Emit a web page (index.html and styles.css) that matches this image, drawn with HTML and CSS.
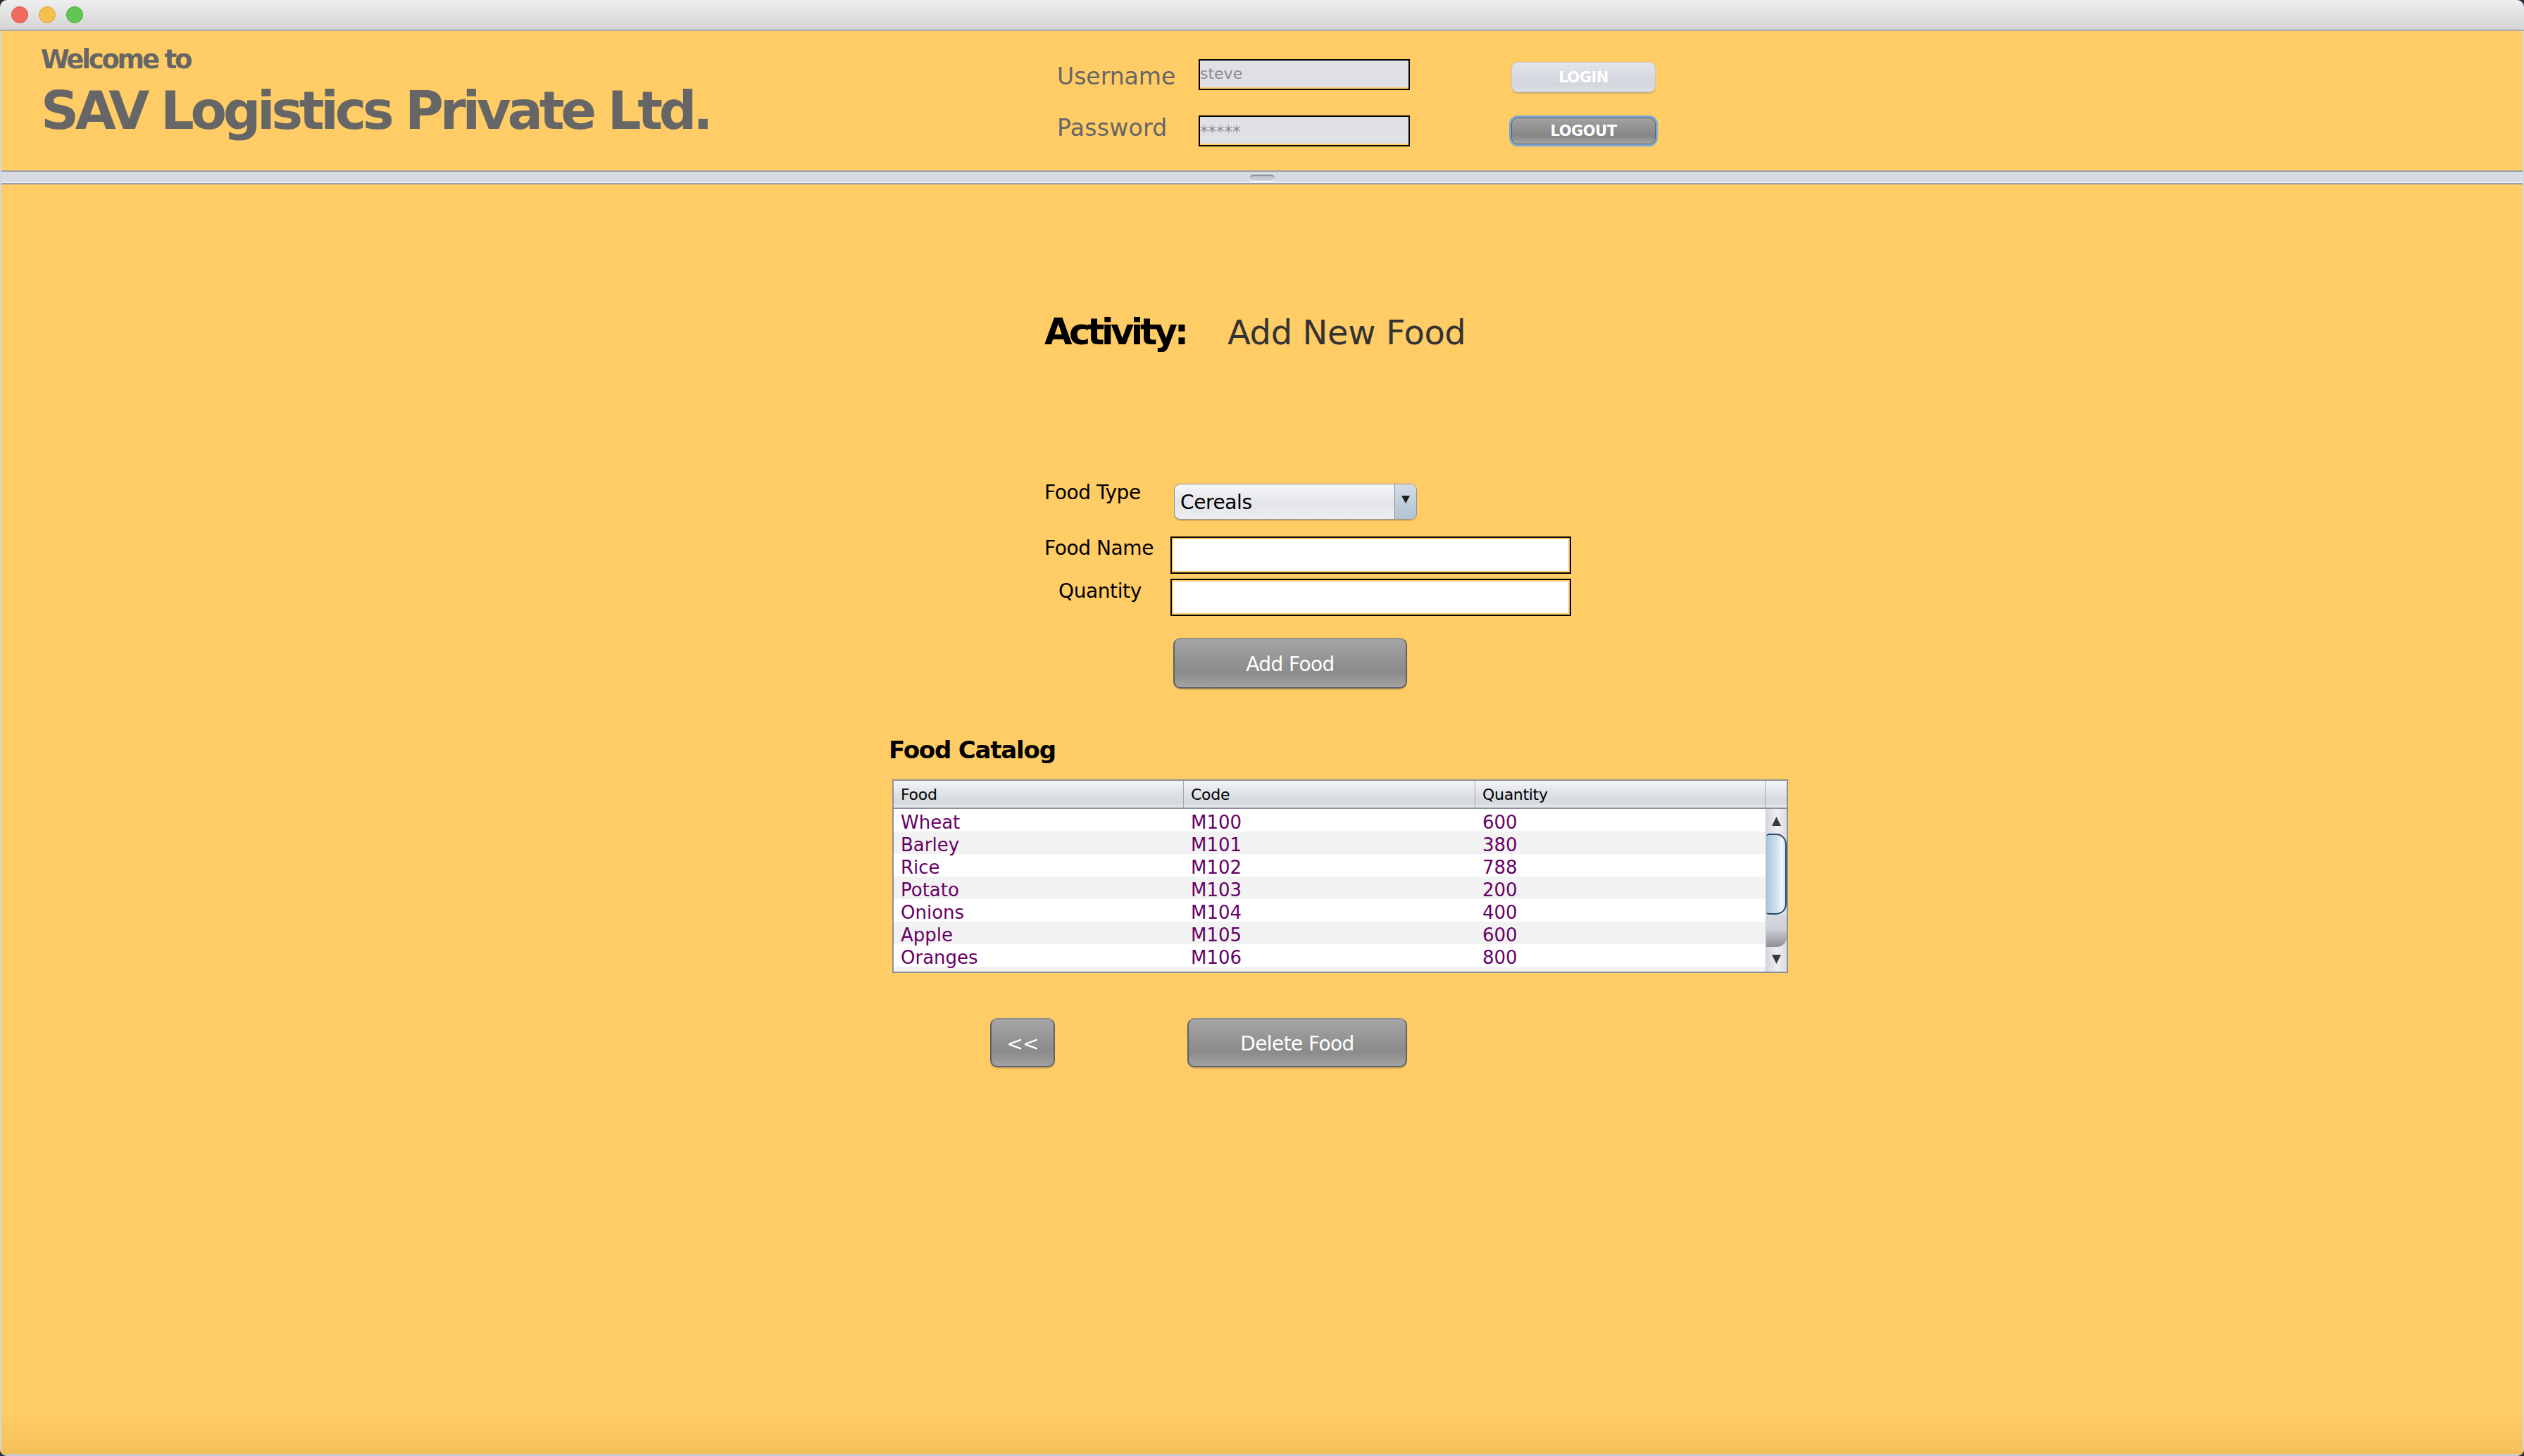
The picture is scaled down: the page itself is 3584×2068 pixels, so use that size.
FILE: index.html
```html
<!DOCTYPE html>
<html lang="en">
<head>
<meta charset="utf-8">
<title>SAV Logistics Private Ltd.</title>
<link rel="stylesheet" href="styles.css">
</head>
<body>
<div class="window">
  <div class="titlebar">
    <span class="light red"></span>
    <span class="light yellow"></span>
    <span class="light green"></span>
  </div>
  <div class="frame">
    <header class="header">
      <div class="brand">
        <div class="welcome">Welcome to</div>
        <div class="company">SAV Logistics Private Ltd.</div>
      </div>
      <div class="login">
        <div class="lbl lbl-user">Username</div>
        <div class="field field-user">steve</div>
        <div class="btn-cell"><button class="btn-login">LOGIN</button></div>
        <div class="lbl lbl-pass">Password</div>
        <div class="field field-pass">*****</div>
        <div class="btn-cell"><button class="btn-logout">LOGOUT</button></div>
      </div>
    </header>
    <div class="splitter"><span class="grip"></span></div>
    <main class="main">
      <div class="activity">
        <span class="act-label">Activity:</span>
        <span class="act-value">Add New Food</span>
      </div>
      <div class="form">
        <div class="row row1">
          <div class="flabel l-type">Food Type</div>
          <div class="combo">
            <span class="combo-text">Cereals</span>
            <span class="combo-arrow"><svg width="12" height="11" viewBox="0 0 12 11"><polygon points="0,0 12,0 6,11" fill="#1e1e1e"/></svg></span>
          </div>
        </div>
        <div class="row row2">
          <div class="flabel l-name">Food Name</div>
          <div class="input"></div>
        </div>
        <div class="row row3">
          <div class="flabel l-qty">Quantity</div>
          <div class="input"></div>
        </div>
      </div>
      <button class="btn add">Add Food</button>
      <h2 class="catalog-title">Food Catalog</h2>
      <div class="table">
        <div class="thead">
          <div class="th">Food</div>
          <div class="th">Code</div>
          <div class="th">Quantity</div>
          <div class="th corner"></div>
        </div>
        <div class="tbody">
          <div class="rows">
            <div class="tr"><span>Wheat</span><span>M100</span><span>600</span></div>
            <div class="tr"><span>Barley</span><span>M101</span><span>380</span></div>
            <div class="tr"><span>Rice</span><span>M102</span><span>788</span></div>
            <div class="tr"><span>Potato</span><span>M103</span><span>200</span></div>
            <div class="tr"><span>Onions</span><span>M104</span><span>400</span></div>
            <div class="tr"><span>Apple</span><span>M105</span><span>600</span></div>
            <div class="tr"><span>Oranges</span><span>M106</span><span>800</span></div>
            <div class="tr"><span></span><span></span><span></span></div>
          </div>
          <div class="vscroll">
            <div class="sb-arrow"><svg width="13" height="13" viewBox="0 0 13 13"><polygon points="6.5,0 13,13 0,13" fill="#3a3a3a"/></svg></div>
            <div class="sb-thumb"></div>
            <div class="sb-end"></div>
            <div class="sb-arrow"><svg width="13" height="13" viewBox="0 0 13 13"><polygon points="0,0 13,0 6.5,13" fill="#3a3a3a"/></svg></div>
          </div>
        </div>
      </div>
      <div class="actions">
        <button class="btn back">&lt;&lt;</button>
        <button class="btn delete">Delete Food</button>
      </div>
    </main>
  </div>
</div>
</body>
</html>
```

FILE: styles.css
```css
html, body {
  margin: 0;
  padding: 0;
  width: 3584px;
  height: 2068px;
  overflow: hidden;
  background: #2b2e3b;
  font-family: "DejaVu Sans", "Liberation Sans", sans-serif;
}

.window {
  width: 3584px;
  height: 2068px;
  border-radius: 10px;
  overflow: hidden;
  display: flex;
  flex-direction: column;
}

/* ---------- title bar ---------- */
.titlebar {
  flex: none;
  height: 42px;
  border-bottom: 2px solid #aeaeae;
  background: linear-gradient(#eeeeee, #d5d5d5);
  display: flex;
  align-items: center;
  padding-left: 16px;
  gap: 15px;
}
.light {
  width: 24px;
  height: 24px;
  border-radius: 50%;
  box-sizing: border-box;
}
.red { background: #ef6b5f; border: 1px solid #d8554a; }
.yellow { background: #f6c04f; border: 1px solid #d9a13f; }
.green { background: #62c655; border: 1px solid #4da73c; }

/* ---------- frame ---------- */
.frame {
  flex: 1;
  display: flex;
  flex-direction: column;
  border-left: 2px solid #d3d7de;
  border-right: 2px solid #d3d7de;
  border-bottom: 3px solid #c9cbd0;
  background: #ffcc66;
}

/* ---------- header ---------- */
.header {
  flex: none;
  height: 198px;
  box-sizing: border-box;
  display: flex;
  padding-left: 56px;
}
.brand {
  flex: none;
  width: 1443px;
  padding-top: 19px;
  color: #666666;
  font-weight: bold;
}
.welcome {
  font-size: 37px;
  line-height: 44px;
  letter-spacing: -3.2px;
}
.company {
  margin-top: 8px;
  font-size: 75px;
  line-height: 84px;
  letter-spacing: -5.3px;
  white-space: nowrap;
}
.login {
  display: grid;
  grid-template-columns: 201px 300px 352px;
  grid-template-rows: 44px 44px;
  row-gap: 36px;
  padding-top: 40px;
}
.lbl {
  font-size: 33px;
  line-height: 44px;
  color: #666666;
}
.lbl-user { margin-top: 3px; }
.lbl-pass { margin-top: -4px; letter-spacing: 0.3px; }
.field {
  box-sizing: border-box;
  height: 44px;
  border: 2px solid #000;
  background: #dfe1e6;
  box-shadow: inset 0 -2px 0 #ffcc66;
  font-size: 22px;
  line-height: 36px;
  padding-top: 1px;
  color: #8c8c8c;
}
.field-pass { font-size: 23px; padding-top: 3px; }
.btn-cell { padding-left: 144px; }
.btn-login, .btn-logout {
  display: block;
  box-sizing: border-box;
  width: 205px;
  padding: 0;
  font-family: inherit;
  font-weight: bold;
  font-size: 21px;
  letter-spacing: -0.5px;
  color: #ffffff;
  border-radius: 9px;
}
.btn-login {
  height: 43px;
  margin-top: 4px;
  border: 1.5px solid #c4c8d0;
  background: linear-gradient(#e3e5ea, #d6d9e0 55%, #d3d6dd 75%, #dcdfe5);
  box-shadow: 0 2px 1px rgba(120, 120, 130, 0.35);
}
.btn-logout {
  height: 38px;
  margin-top: 3px;
  border: 1.5px solid #55585f;
  background: linear-gradient(#a3a3a3, #8a8a8a 55%, #878787 70%, #a6a6a6);
  box-shadow: 0 0 0 3px #7ea8d6;
}

/* ---------- splitter ---------- */
.splitter {
  flex: none;
  height: 20px;
  box-sizing: border-box;
  border-top: 2px solid #9a9ea8;
  border-bottom: 2px solid #9a9ea8;
  background: #d7dae2;
  box-shadow: inset 0 -2px 0 #eceef2;
  display: flex;
  justify-content: center;
  align-items: flex-start;
  padding-top: 4px;
}
.grip {
  width: 35px;
  height: 10px;
  box-sizing: border-box;
  border-radius: 5px;
  border-top: 2px solid #8f949d;
  border-bottom: 1.5px solid #ffffff;
  background: linear-gradient(#b9bdc6, #d2d5dc);
}

/* ---------- main ---------- */
.main {
  flex: 1;
  display: flex;
  flex-direction: column;
  align-items: flex-start;
  padding-left: 1262px;
  background: linear-gradient(to bottom, rgba(200, 140, 30, 0) calc(100% - 60px), rgba(200, 140, 30, 0.2));
}

.activity {
  margin-top: 180px;
  margin-left: 219px;
  display: flex;
  align-items: baseline;
}
.act-label {
  width: 260px;
  font-size: 51px;
  line-height: 60px;
  font-weight: bold;
  letter-spacing: -4.4px;
  color: #000;
}
.act-value {
  font-size: 48px;
  line-height: 60px;
  letter-spacing: -0.4px;
  color: #333333;
}

.form {
  margin-top: 185px;
  margin-left: 219px;
}
.row {
  display: flex;
  align-items: flex-start;
}
.row1 { height: 51px; }
.row2 { margin-top: 24px; }
.row3 { margin-top: 7px; }
.flabel {
  flex: none;
  width: 179px;
  box-sizing: border-box;
  font-size: 28px;
  line-height: 32px;
  letter-spacing: -0.4px;
  color: #000;
}
.l-type { margin-top: -3px; }
.l-name { margin-top: 1px; }
.l-qty { margin-top: 2px; padding-left: 20px; }

.combo {
  margin-left: 5px;
  width: 345px;
  height: 51px;
  box-sizing: border-box;
  border: 1.5px solid #8c8f96;
  border-radius: 9px;
  background: linear-gradient(#f6f7f9, #e3e5ea 55%, #eceef1);
  box-shadow: 0 2px 1px rgba(0, 0, 0, 0.15);
  display: flex;
  overflow: hidden;
}
.combo-text {
  flex: 1;
  padding: 2px 0 0 8px;
  font-size: 28px;
  line-height: 48px;
  letter-spacing: -0.4px;
  color: #000;
}
.combo-arrow {
  flex: none;
  width: 31px;
  border-left: 1px solid #8c8f96;
  background: linear-gradient(#d4dde7, #b2c2d3);
  display: flex;
  align-items: center;
  justify-content: center;
  padding-bottom: 6px;
  box-sizing: border-box;
}

.input {
  width: 569px;
  height: 53px;
  box-sizing: border-box;
  border: 2px solid #000;
  background: #ffffff;
  box-shadow: inset 0 0 0 2px #ffcc66;
}

.btn {
  box-sizing: border-box;
  padding: 3px 0 0 0;
  border: 2px solid #5e6169;
  border-top-color: #8d8d8d;
  border-radius: 10px;
  background: linear-gradient(#a6a6a6, #8f8f8f 55%, #8b8b8b 70%, #a3a3a3);
  box-shadow: 0 2px 1px rgba(0, 0, 0, 0.12);
  color: #ffffff;
  font-family: inherit;
  font-size: 28px;
  letter-spacing: -0.6px;
}
.add {
  margin-top: 31px;
  margin-left: 402px;
  width: 332px;
  height: 72px;
}

.catalog-title {
  margin: 67px 0 0 -2px;
  font-size: 34px;
  line-height: 40px;
  font-weight: bold;
  letter-spacing: -1.2px;
  color: #000;
}

/* ---------- table ---------- */
.table {
  margin-top: 22px;
  margin-left: 3px;
  width: 1272px;
  height: 275px;
  box-sizing: border-box;
  border: 2px solid #8d9099;
  background: #ffffff;
}
.thead {
  display: grid;
  grid-template-columns: 412px 414px 412px 30px;
  height: 40px;
  box-sizing: border-box;
  border-bottom: 2px solid #8b8e96;
  background: linear-gradient(#f4f5f8, #e0e3e8 45%, #d5d8df 80%, #e6e8ed);
}
.th {
  box-sizing: border-box;
  padding: 2px 0 0 10px;
  font-size: 22px;
  line-height: 36px;
  letter-spacing: -0.3px;
  color: #000;
  border-right: 1.5px solid #a3a6ad;
}
.th.corner { border-right: none; }
.tbody {
  display: flex;
  height: 231px;
  overflow: hidden;
}
.rows {
  width: 1238px;
  flex: none;
}
.tr {
  display: grid;
  grid-template-columns: 412px 414px 412px;
  height: 32px;
  box-sizing: border-box;
  padding-top: 6px;
  font-size: 26px;
  line-height: 26px;
  color: #660066;
}
.tr span { padding-left: 10px; }
.tr:nth-child(even) { background: #f2f2f2; }

.vscroll {
  width: 30px;
  flex: none;
  box-sizing: border-box;
  border-left: 1px solid #c4c7cd;
  background: linear-gradient(to right, #d4d7dd, #eef0f3 55%, #d9dce1);
  display: flex;
  flex-direction: column;
}
.sb-arrow {
  height: 35px;
  display: flex;
  align-items: center;
  justify-content: center;
}
.sb-thumb {
  height: 115px;
  box-sizing: border-box;
  border: 2px solid #2b4866;
  border-left: none;
  border-radius: 4px 15px 15px 4px;
  background: linear-gradient(to right, #a9c3da, #cfe2f0 55%, #eefafe 85%, #c8dceb);
}
.sb-end {
  height: 46px;
  border-bottom-right-radius: 14px;
  background: linear-gradient(#d6d9df 0%, #cdd0d6 45%, #8d8f94 100%);
}

/* ---------- bottom actions ---------- */
.actions {
  margin-top: 64px;
  display: flex;
}
.back {
  margin-left: 142px;
  width: 92px;
  height: 70px;
}
.delete {
  margin-left: 188px;
  width: 312px;
  height: 70px;
}
```
